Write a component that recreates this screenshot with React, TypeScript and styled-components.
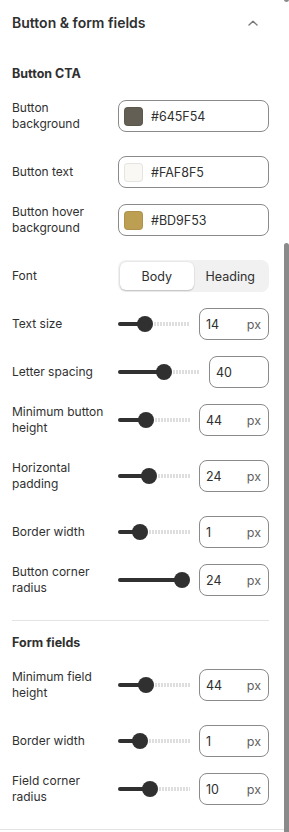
import { FunctionComponent, ReactNode } from "react";
import styled, { createGlobalStyle } from "styled-components";

const GlobalStyle = createGlobalStyle`
  * {
    box-sizing: border-box;
  }
  body {
    margin: 0;
    background: #ffffff;
    font-family: Inter, "Noto Sans", "Liberation Sans", sans-serif;
    color: #303030;
  }
`;

type SliderRowData = {
  label: ReactNode;
  tall?: boolean;
  value: string;
  unit?: string;
  /** 0..1, where the thumb sits on the track */
  fraction: number;
  narrow?: boolean;
};

const ctaSliders: SliderRowData[] = [
  { label: "Text size", value: "14", unit: "px", fraction: 0.34 },
  { label: "Letter spacing", value: "40", fraction: 0.57, narrow: true },
  {
    label: (
      <>
        Minimum button
        <br />
        height
      </>
    ),
    tall: true,
    value: "44",
    unit: "px",
    fraction: 0.36,
  },
  {
    label: (
      <>
        Horizontal
        <br />
        padding
      </>
    ),
    tall: true,
    value: "24",
    unit: "px",
    fraction: 0.41,
  },
  { label: "Border width", value: "1", unit: "px", fraction: 0.25 },
  {
    label: (
      <>
        Button corner
        <br />
        radius
      </>
    ),
    tall: true,
    value: "24",
    unit: "px",
    fraction: 1,
  },
];

const fieldSliders: SliderRowData[] = [
  {
    label: (
      <>
        Minimum field
        <br />
        height
      </>
    ),
    tall: true,
    value: "44",
    unit: "px",
    fraction: 0.36,
  },
  { label: "Border width", value: "1", unit: "px", fraction: 0.25 },
  {
    label: (
      <>
        Field corner
        <br />
        radius
      </>
    ),
    tall: true,
    value: "10",
    unit: "px",
    fraction: 0.43,
  },
];

const THUMB = 16;

const Slider: FunctionComponent<{ fraction: number }> = ({ fraction }) => {
  const pos = `calc(${THUMB / 2}px + (100% - ${THUMB}px) * ${fraction})`;
  return (
    <SliderTrack>
      <SliderFill style={{ width: pos }} />
      <SliderRest style={{ left: pos }} />
      <SliderThumb style={{ left: pos }} />
    </SliderTrack>
  );
};

const SliderRow: FunctionComponent<{ row: SliderRowData }> = ({ row }) => (
  <Row tall={row.tall}>
    <Label>{row.label}</Label>
    <Controls>
      <Slider fraction={row.fraction} />
      <NumberBox narrow={row.narrow}>
        <span>{row.value}</span>
        {row.unit && <Unit>{row.unit}</Unit>}
      </NumberBox>
    </Controls>
  </Row>
);

const ColorRow: FunctionComponent<{
  label: ReactNode;
  tall?: boolean;
  color: string;
}> = ({ label, tall, color }) => (
  <Row tall={tall}>
    <Label>{label}</Label>
    <ColorBox>
      <Swatch color={color} />
      <span>{color}</span>
    </ColorBox>
  </Row>
);

const App: FunctionComponent = () => {
  return (
    <>
      <GlobalStyle />
      <Panel>
        <Header>
          <Title>Button &amp; form fields</Title>
          <ChevronButton>
            <svg width="10" height="6" viewBox="0 0 10 6" fill="none">
              <path
                d="M1 5 L5 1.2 L9 5"
                stroke="#7a7a7a"
                strokeWidth="1.4"
                strokeLinecap="round"
                strokeLinejoin="round"
              />
            </svg>
          </ChevronButton>
        </Header>

        <Section>
          <SectionTitle>Button CTA</SectionTitle>
          <ColorRow
            label={
              <>
                Button
                <br />
                background
              </>
            }
            tall
            color="#645F54"
          />
          <ColorRow label="Button text" color="#FAF8F5" />
          <ColorRow
            label={
              <>
                Button hover
                <br />
                background
              </>
            }
            tall
            color="#BD9F53"
          />
          <Row>
            <Label>Font</Label>
            <Segmented>
              <Segment active>Body</Segment>
              <Segment>Heading</Segment>
            </Segmented>
          </Row>
          {ctaSliders.map((row, i) => (
            <SliderRow key={i} row={row} />
          ))}
          <Divider />
        </Section>

        <Section bottomBorder>
          <SectionTitle>Form fields</SectionTitle>
          {fieldSliders.map((row, i) => (
            <SliderRow key={i} row={row} />
          ))}
        </Section>

        <ScrollThumbTop />
        <ScrollThumb />
      </Panel>
    </>
  );
};

const Panel = styled.div`
  position: relative;
  width: 289px;
  height: 832px;
  overflow: hidden;
  background: #ffffff;
`;

const Header = styled.div`
  display: flex;
  align-items: center;
  justify-content: space-between;
  height: 46px;
  padding: 0 20px 0 12px;
`;

const Title = styled.div`
  font-size: 14px;
  font-weight: 600;
  line-height: 20px;
  color: #303030;
`;

const ChevronButton = styled.div`
  display: flex;
  align-items: center;
  justify-content: center;
  width: 32px;
  height: 32px;
`;

const Section = styled.div<{ bottomBorder?: boolean }>`
  padding: 0 20px 0 12px;
  border-bottom: ${({ bottomBorder }) =>
    bottomBorder ? "1px solid #e3e3e3" : "none"};
`;

const SectionTitle = styled.div`
  padding: 20px 0 18px;
  font-size: 12.5px;
  font-weight: 650;
  line-height: 16px;
  color: #303030;
`;

const Divider = styled.div`
  height: 1px;
  background: #e3e3e3;
  margin-bottom: -6px;
`;

const Row = styled.div<{ tall?: boolean }>`
  display: grid;
  grid-template-columns: 106px 1fr;
  align-items: center;
  height: 32px;
  margin-bottom: ${({ tall }) => (tall ? "24px" : "16px")};
`;

const Label = styled.div`
  font-size: 12px;
  line-height: 16px;
  color: #303030;
`;

const FieldBase = styled.div`
  display: flex;
  align-items: center;
  height: 32px;
  border: 1px solid #8a8a8a;
  border-radius: 8px;
  font-size: 12.5px;
  color: #303030;
  background: #ffffff;
`;

const ColorBox = styled(FieldBase)`
  gap: 8px;
  padding: 0 6px 0 5px;
`;

const Swatch = styled.div<{ color: string }>`
  width: 19px;
  height: 19px;
  border-radius: 4px;
  background: ${({ color }) => color};
  box-shadow: inset 0 0 0 1px rgba(0, 0, 0, 0.08);
`;

const Segmented = styled.div`
  display: flex;
  height: 32px;
  padding: 2px;
  border-radius: 8px;
  background: #f1f1f1;
`;

const Segment = styled.div<{ active?: boolean }>`
  flex: 1;
  display: flex;
  align-items: center;
  justify-content: center;
  border-radius: 6px;
  font-size: 12.5px;
  color: #303030;
  background: ${({ active }) => (active ? "#ffffff" : "transparent")};
  box-shadow: ${({ active }) =>
    active ? "0 1px 1.5px rgba(0,0,0,0.18), 0 0 0 0.5px rgba(0,0,0,0.06)" : "none"};
`;

const Controls = styled.div`
  display: flex;
  align-items: center;
  gap: 9px;
`;

const SliderTrack = styled.div`
  position: relative;
  flex: 1;
  height: 16px;
`;

const SliderFill = styled.div`
  position: absolute;
  left: 0;
  top: 6px;
  height: 4px;
  border-radius: 2px;
  background: #303030;
`;

const SliderRest = styled.div`
  position: absolute;
  right: 0;
  top: 6px;
  height: 4px;
  background: repeating-linear-gradient(
    to right,
    #dedede 0 2px,
    transparent 2px 3px
  );
`;

const SliderThumb = styled.div`
  position: absolute;
  top: 0;
  width: 16px;
  height: 16px;
  margin-left: -8px;
  border-radius: 50%;
  background: #303030;
`;

const NumberBox = styled(FieldBase)<{ narrow?: boolean }>`
  flex: none;
  width: ${({ narrow }) => (narrow ? "60px" : "70px")};
  justify-content: space-between;
  padding: 0 7px 0 6px;
`;

const Unit = styled.span`
  color: #616161;
`;

const ScrollThumb = styled.div`
  position: absolute;
  right: 0;
  top: 243px;
  width: 5px;
  bottom: -4px;
  border-radius: 3px;
  background: #8a8a8a;
`;

const ScrollThumbTop = styled.div`
  position: absolute;
  right: 0;
  top: -3px;
  width: 5px;
  height: 5px;
  border-radius: 3px;
  background: #8a8a8a;
`;

export default App;
